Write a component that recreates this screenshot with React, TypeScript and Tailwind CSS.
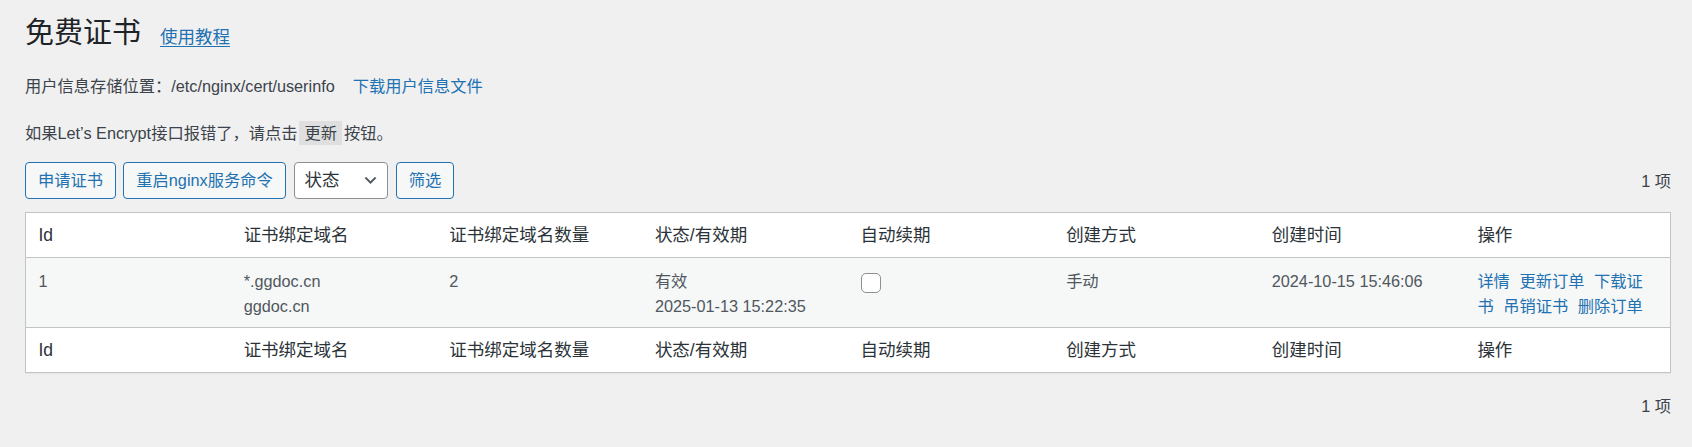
import React from 'react';

const columns = ['Id', '证书绑定域名', '证书绑定域名数量', '状态/有效期', '自动续期', '创建方式', '创建时间', '操作'];

const actions = ['详情', '更新订单', '下载证书', '吊销证书', '删除订单'];

const font = { fontFamily: '"Liberation Sans", "Noto Sans CJK SC", sans-serif' };

const HeaderRow: React.FC<{ foot?: boolean }> = ({ foot }) => (
  <tr className={foot ? 'border-t border-[#c3c4c7]' : 'border-b border-[#c3c4c7]'}>
    {columns.map((c) => (
      <th
        key={c}
        className="px-[12.5px] py-[10px] text-left text-[17.5px] leading-[24px] font-normal text-[#2c3338]"
      >
        {c}
      </th>
    ))}
  </tr>
);

const App: React.FC = () => {
  return (
    <div className="min-h-screen bg-[#f0f0f1] pl-[25px] pr-[21px] pt-[15px] text-[16.25px] text-[#3c434a]" style={font}>
      {/* Title */}
      <div className="flex items-baseline">
        <h1 className="text-[29px] leading-[37px] font-normal text-[#1d2327]">免费证书</h1>
        <a href="#" className="ml-[19px] text-[17.5px] text-[#2271b1] underline underline-offset-[3px]">
          使用教程
        </a>
      </div>

      <p className="mt-[22px] leading-[24px]">
        用户信息存储位置：/etc/nginx/cert/userinfo
        <a href="#" className="ml-[18px] text-[#2271b1]">下载用户信息文件</a>
      </p>

      <p className="mt-[22.5px] leading-[24px]">
        如果Let’s Encrypt接口报错了，请点击
        <code className="mx-[2px] bg-[#dfdfe0] px-[5px] py-[3px]" style={font}>更新</code>
        按钮。
      </p>

      {/* Toolbar */}
      <div className="mt-[17.5px] flex items-center justify-between">
        <div className="flex items-center">
          <button className="flex h-[37px] w-[91px] items-center justify-center rounded-[4px] border border-[#2271b1] bg-[#f6f7f7] text-[#2271b1]">
            申请证书
          </button>
          <button className="ml-[7px] flex h-[37px] w-[163px] items-center justify-center rounded-[4px] border border-[#2271b1] bg-[#f6f7f7] text-[#2271b1]">
            重启nginx服务命令
          </button>
          <div className="ml-[7.5px] flex h-[37px] w-[94px] items-center justify-between rounded-[4px] border border-[#8c8f94] bg-white pl-[10px] pr-[8px] text-[17.5px] text-[#2c3338]">
            <span>状态</span>
            <svg width="17" height="17" viewBox="0 0 20 20" className="fill-[#50575e]">
              <path d="M5 6l5 5 5-5 2 1-7 7-7-7 2-1z" />
            </svg>
          </div>
          <button className="ml-[8.5px] flex h-[37px] w-[58px] items-center justify-center rounded-[4px] border border-[#2271b1] bg-[#f6f7f7] text-[#2271b1]">
            筛选
          </button>
        </div>
        <span className="leading-[24px]">1 项</span>
      </div>

      {/* Table */}
      <table className="mt-[13px] w-full table-fixed border border-[#c3c4c7] bg-white shadow-[0_1px_1px_rgba(0,0,0,0.04)]">
        <thead>
          <HeaderRow />
        </thead>
        <tbody>
          <tr className="bg-[#f6f7f7] align-top text-[#50575e]">
            <td className="px-[12.5px] pt-[11px] pb-[9px] leading-[24.5px]">1</td>
            <td className="px-[12.5px] pt-[11px] pb-[9px] leading-[24.5px]">
              *.ggdoc.cn
              <br />
              ggdoc.cn
            </td>
            <td className="px-[12.5px] pt-[11px] pb-[9px] leading-[24.5px]">2</td>
            <td className="px-[12.5px] pt-[11px] pb-[9px] leading-[24.5px]">
              有效
              <br />
              2025-01-13 15:22:35
            </td>
            <td className="px-[12.5px] pt-[15px] pb-[9px]">
              <input
                type="checkbox"
                className="block h-[20px] w-[20px] appearance-none rounded-[5px] border border-[#8c8f94] bg-white"
              />
            </td>
            <td className="px-[12.5px] pt-[11px] pb-[9px] leading-[24.5px]">手动</td>
            <td className="px-[12.5px] pt-[11px] pb-[9px] leading-[24.5px]">2024-10-15 15:46:06</td>
            <td className="px-[12.5px] pt-[11px] pb-[9px] leading-[24.5px]">
              {actions.map((a, i) => (
                <React.Fragment key={a}>
                  <a href="#" className={`text-[#2271b1] ${i < actions.length - 1 ? 'mr-[5px]' : ''}`}>
                    {a}
                  </a>{' '}
                </React.Fragment>
              ))}
            </td>
          </tr>
        </tbody>
        <tfoot>
          <HeaderRow foot />
        </tfoot>
      </table>

      <div className="mt-[21px] flex justify-end">
        <span className="leading-[24px]">1 项</span>
      </div>
    </div>
  );
};

export default App;
